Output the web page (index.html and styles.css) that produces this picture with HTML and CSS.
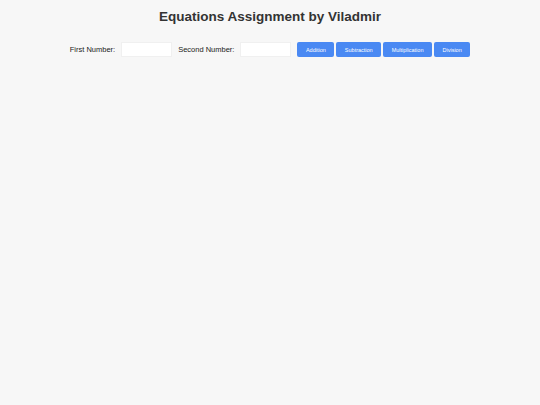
FILE: index.html
```html
<!DOCTYPE html>
<html>
<head>
<meta charset="utf-8">
<link rel="stylesheet" href="styles.css">
</head>
<body>
<h1 class="title">Equations Assignment by Viladmir</h1>
<div class="row">
  <label class="lbl">First Number:</label>
  <input class="num" type="text">
  <label class="lbl">Second Number:</label>
  <input class="num" type="text">
  <div class="btns">
    <button class="btn">Addition</button>
    <button class="btn">Subtraction</button>
    <button class="btn">Multiplication</button>
    <button class="btn">Division</button>
  </div>
</div>
</body>
</html>
```
FILE: styles.css
```css
html, body {
  margin: 0;
  padding: 0;
  background: #f7f7f7;
  font-family: "Liberation Sans", Arial, sans-serif;
  color: #333;
}
.title {
  margin: 0;
  padding-top: 8px;
  text-align: center;
  font-size: 13.5px;
  font-weight: bold;
  line-height: 17px;
  color: #333;
}
.row {
  display: flex;
  justify-content: center;
  align-items: center;
  gap: 6px;
  margin-top: 17px;
}
.lbl {
  font-size: 7.5px;
  color: #222;
}
.num {
  width: 51px;
  height: 15px;
  box-sizing: border-box;
  border: 1px solid #f0f0f0;
  background: #fff;
  margin: 0;
  padding: 0 3px;
  font-size: 7px;
  outline: none;
}
.btns {
  display: flex;
  gap: 2px;
}
.btn {
  height: 15px;
  box-sizing: border-box;
  border: none;
  border-radius: 2px;
  background: #4a89f3;
  color: #fff;
  font-family: "Liberation Sans", Arial, sans-serif;
  font-size: 5.5px;
  padding: 0 8.5px;
  margin: 0;
}
```
